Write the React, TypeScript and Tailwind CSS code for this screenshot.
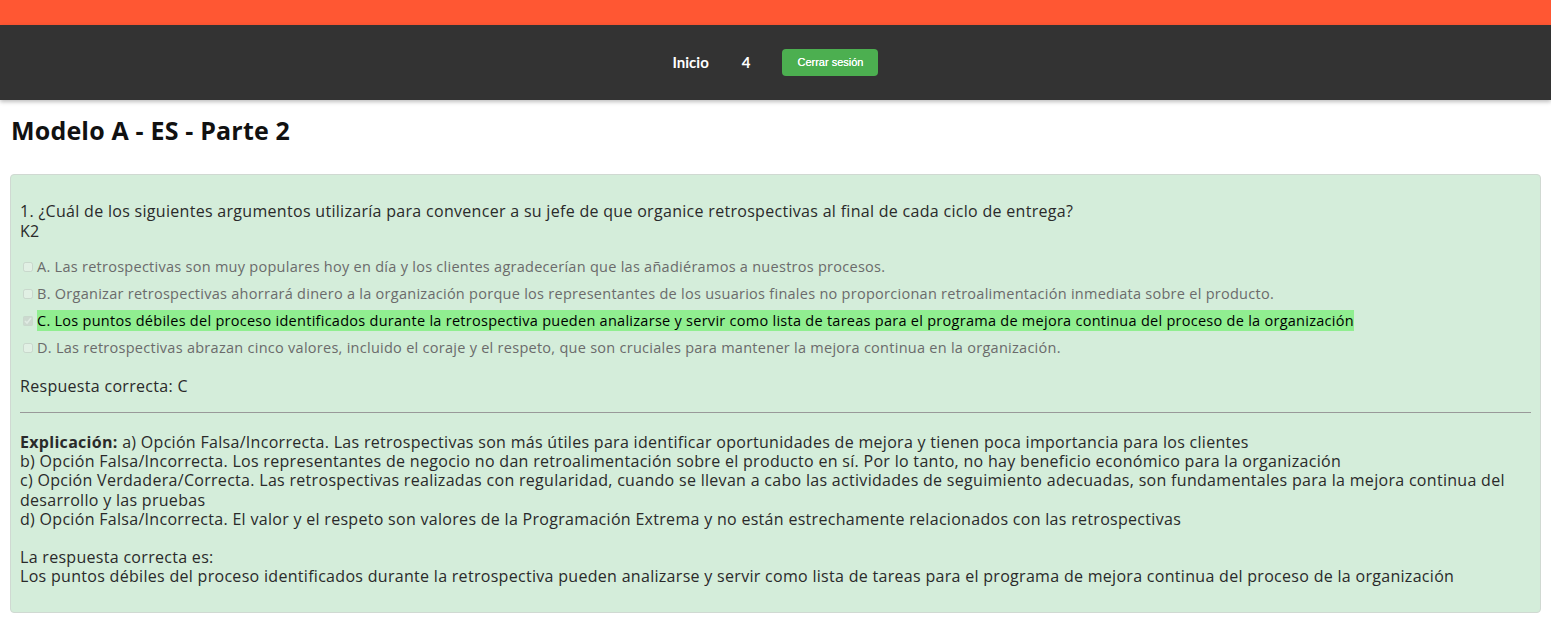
import React from "react";

const body = '"Open Sans", "Noto Sans", sans-serif';

const options = [
  { key: "A", text: "A. Las retrospectivas son muy populares hoy en día y los clientes agradecerían que las añadiéramos a nuestros procesos.", checked: false },
  { key: "B", text: "B. Organizar retrospectivas ahorrará dinero a la organización porque los representantes de los usuarios finales no proporcionan retroalimentación inmediata sobre el producto.", checked: false },
  { key: "C", text: "C. Los puntos débiles del proceso identificados durante la retrospectiva pueden analizarse y servir como lista de tareas para el programa de mejora continua del proceso de la organización", checked: true },
  { key: "D", text: "D. Las retrospectivas abrazan cinco valores, incluido el coraje y el respeto, que son cruciales para mantener la mejora continua en la organización.", checked: false },
];

export default function App() {
  return (
    <div className="min-h-[618px] bg-white" style={{ fontFamily: body }}>
      <div className="h-[25px] bg-[#ff5733]" />
      <nav className="relative z-10 flex h-[75px] items-center justify-center bg-[#333333] shadow-[0_2px_4px_rgba(0,0,0,0.25)]">
        <span className="text-[15px] font-bold text-white" style={{ fontFamily: "Lato, sans-serif" }}>Inicio</span>
        <span className="ml-[33px] text-[15px] font-bold text-white" style={{ fontFamily: "Lato, sans-serif" }}>4</span>
        <button
          className="ml-[32px] h-[27px] w-[96px] rounded-[4px] bg-[#4caf50] text-[11px] font-normal text-white [text-shadow:0_0_0.4px_#fff]"
          style={{ fontFamily: '"Liberation Sans", Arial, sans-serif' }}
        >
          Cerrar sesión
        </button>
      </nav>
      <h2 className="px-[11px] pt-[14px] text-[25px] font-bold leading-[32px] tracking-[0.18px] text-[#111]">Modelo A - ES - Parte 2</h2>
      <div className="mx-[10px] mt-[28px] rounded-[4px] border border-[#d0d9d2] bg-[#d4edda] px-[9px] pb-[25px] pt-[27px] tracking-[0.3px] text-[#2a2a2a]">
        <p className="text-[16px] leading-[19.5px]">
          1. ¿Cuál de los siguientes argumentos utilizaría para convencer a su jefe de que organice retrospectivas al final de cada ciclo de entrega?
          <br />
          K2
        </p>
        <div className="mt-[15px] flex flex-col gap-[6px]">
          {options.map((o) => (
            <label key={o.key} className="flex items-center text-[14.5px] leading-[21px] tracking-[0.27px]">
              <input
                type="checkbox"
                disabled
                checked={o.checked}
                readOnly
                className="ml-[3px] mr-[4px] h-[10px] w-[10px] opacity-60"
              />
              <span className={o.checked ? "bg-[#90ee90] text-black" : "text-[#6b6b6b]"}>{o.text}</span>
            </label>
          ))}
        </div>
        <p className="mt-[18px] text-[16px] leading-[20px]">Respuesta correcta: C</p>
        <hr className="mt-[16px] border-t border-[#999]" />
        <div className="mt-[20px] text-[16px] leading-[19.2px]">
          <b>Explicación:</b> a) Opción Falsa/Incorrecta. Las retrospectivas son más útiles para identificar oportunidades de mejora y tienen poca importancia para los clientes
          <br />
          b) Opción Falsa/Incorrecta. Los representantes de negocio no dan retroalimentación sobre el producto en sí. Por lo tanto, no hay beneficio económico para la organización
          <br />
          c) Opción Verdadera/Correcta. Las retrospectivas realizadas con regularidad, cuando se llevan a cabo las actividades de seguimiento adecuadas, son fundamentales para la mejora continua del desarrollo y las pruebas
          <br />
          d) Opción Falsa/Incorrecta. El valor y el respeto son valores de la Programación Extrema y no están estrechamente relacionados con las retrospectivas
          <br />
          <br />
          La respuesta correcta es:
          <br />
          Los puntos débiles del proceso identificados durante la retrospectiva pueden analizarse y servir como lista de tareas para el programa de mejora continua del proceso de la organización
        </div>
      </div>
    </div>
  );
}
